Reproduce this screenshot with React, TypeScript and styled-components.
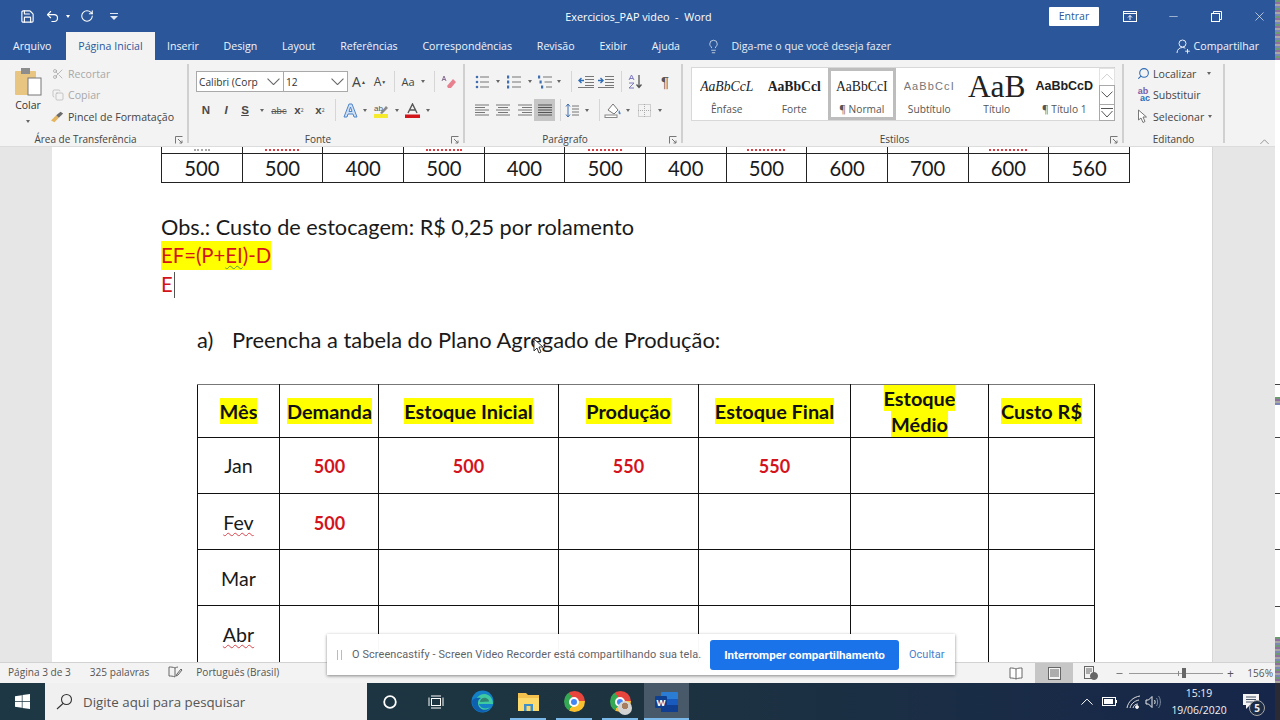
import React from "react";
import styled, { createGlobalStyle } from "styled-components";
import { Save, Undo2, RotateCw, Lightbulb, Scissors, Copy, X, Minus, Search } from "lucide-react";

const Global = createGlobalStyle`
  html, body { margin: 0; padding: 0; width: 1280px; height: 720px; overflow: hidden; background: #fff; }
  * { box-sizing: border-box; }
`;

const UI = `"Open Sans", "Liberation Sans", sans-serif`;
const BODY = `Lato, "Liberation Sans", sans-serif`;

const Screen = styled.div`
  position: relative; width: 1280px; height: 720px; display: flex; overflow: hidden; font-family: ${UI};
`;
const Main = styled.div` width: 1275px; height: 720px; display: flex; flex-direction: column; flex: none; `;
const Strip = styled.div` width: 5px; height: 720px; display: flex; flex-direction: column; background: #fff; `;
const StripPart = styled.div<{ $h: number; $kind: string }>`
  height: ${(p) => p.$h}px; flex: none;
  background: ${(p) =>
    p.$kind === "noise"
      ? "repeating-linear-gradient(180deg,#6f9a72 0 2px,#8f6fa0 2px 4px,#a8a8a0 4px 6px,#7d86b8 6px 8px)"
      : p.$kind === "tick" ? "#444" : p.$kind === "dark" ? "#2a2a35" : "#fff"};
`;

/* Title bar */
const TitleBar = styled.div`
  height: 32px; background: #2b579a; color: #fff; display: grid; grid-template-columns: 1fr auto 1fr; align-items: center; flex: none;
`;
const Qat = styled.div` display: flex; align-items: center; padding-left: 19px; color: #fff; `;
const QatSlot = styled.div<{ $w: number; $ml?: number }>`
  width: ${(p) => p.$w}px; margin-left: ${(p) => p.$ml || 0}px; display: flex; justify-content: center; align-items: center;
`;
const TitleText = styled.div` font-size: 10.8px; color: #fff; white-space: pre; padding-left: 2px; `;
const WinControls = styled.div` display: flex; justify-content: flex-end; align-items: center; gap: 11px; `;
const Entrar = styled.div`
  width: 50px; height: 19px; background: #fff; color: #2b579a; font-size: 10.5px; display: flex; align-items: center; justify-content: center; margin-right: 4px; border-radius: 1px;
`;
const WinBtn = styled.div` width: 32px; display: flex; justify-content: center; align-items: center; color: #fff; `;

/* Tabs */
const TabBar = styled.div` height: 28px; background: #2b579a; display: flex; align-items: stretch; flex: none; `;
const Tab = styled.div<{ $active?: boolean; $first?: boolean }>`
  padding: ${(p) => (p.$first ? "0 15px 0 13px" : p.$active ? "0 12px" : "0 12.4px")};
  font-size: 10.6px; display: flex; align-items: center; white-space: nowrap;
  color: ${(p) => (p.$active ? "#2b579a" : "#f1f4fa")};
  background: ${(p) => (p.$active ? "#f3f3f3" : "transparent")};
`;
const TellMe = styled.div` display: flex; align-items: center; gap: 10px; margin-left: 14px; color: #e8edf6; font-size: 10.6px; `;
const ShareBox = styled.div` margin-left: auto; padding-right: 16px; display: flex; align-items: center; gap: 3px; color: #f1f4fa; font-size: 10.6px; `;

/* Ribbon */
const Ribbon = styled.div`
  height: 87px; background: #f3f3f3; border-bottom: 1px solid #dcdcdc; padding: 4px 0 3px; display: flex; flex: none; position: relative;
  color: #444;
`;
const Group = styled.div<{ $w: number; $plain?: boolean }>`
  width: ${(p) => p.$w}px; height: 79px; display: flex; flex-direction: column; flex: none;
  ${(p) => (p.$plain ? "" : "border-right: 2px solid #d0d0d0;")}
`;
const GroupBody = styled.div` flex: 1; display: flex; min-height: 0; `;
const GroupFoot = styled.div` height: 11px; display: flex; align-items: center; flex: none; margin-bottom: -2px; `;
const GroupLabel = styled.div` flex: 1; text-align: center; font-size: 10px; color: #444; line-height: 11px; `;
const Launcher = styled.div` width: 16px; display: flex; justify-content: center; color: #777; `;

const ColarCol = styled.div` width: 50px; display: flex; flex-direction: column; align-items: center; padding: 3px 0 0 6px; flex: none; font-size: 10.5px; color: #333; `;
const ColarText = styled.div` margin-top: 3px; line-height: 13px; `;
const ClipRows = styled.div` display: flex; flex-direction: column; margin: -1px 0 0 1px; `;
const ClipRow = styled.div<{ $off?: boolean }>`
  height: 21.5px; display: flex; align-items: center; gap: 4px; font-size: 10.6px; white-space: nowrap;
  color: ${(p) => (p.$off ? "#a8a8a8" : "#444")};
`;
const ClipIcon = styled.div<{ $w?: number }>` width: ${(p) => p.$w || 13}px; display: flex; justify-content: center; flex: none; `;

const Rows = styled.div<{ $pl: number }>` padding: 7px 0 0 ${(p) => p.$pl}px; display: flex; flex-direction: column; gap: 7px; `;
const ToolRow = styled.div<{ $h: number }>` height: ${(p) => p.$h}px; display: flex; align-items: center; `;
const Tool = styled.div<{ $w: number; $on?: boolean; $c?: string }>`
  width: ${(p) => p.$w}px; height: 100%; display: flex; align-items: center; justify-content: center; flex: none;
  font-size: 11px; color: ${(p) => p.$c || "#444"};
  background: ${(p) => (p.$on ? "#c6c6c6" : "transparent")};
`;
const Sep = styled.div<{ $w: number }>`
  width: ${(p) => p.$w}px; height: 100%; flex: none; display: flex; justify-content: center;
  &::before { content: ""; width: 1px; background: #d6d6d6; }
`;
const Caret = styled.span`
  width: 0; height: 0; border-left: 2.5px solid transparent; border-right: 2.5px solid transparent; border-top: 3px solid #666;
`;
const FontSelect = styled.div<{ $w: number }>`
  width: ${(p) => p.$w}px; height: 21px; background: #fff; border: 1px solid #a9a9a9; margin-left: -1px; flex: none;
  display: flex; align-items: center; justify-content: space-between; padding: 0 3px 0 2px; font-size: 10.2px; color: #333; white-space: nowrap; overflow: hidden;
  &:first-child { margin-left: 0; }
`;
const BoldLetter = styled.span<{ $italic?: boolean; $under?: boolean }>`
  font-family: "Liberation Sans", sans-serif; font-weight: 700; font-size: 11.5px; color: #4a4a4a;
  font-style: ${(p) => (p.$italic ? "italic" : "normal")};
  text-decoration: ${(p) => (p.$under ? "underline" : "none")};
`;
const SubText = styled.span` font-family: "Liberation Sans", sans-serif; font-size: 9.5px; color: #555; `;
const Mini = styled.sup` font-size: 5px; vertical-align: 4px; `;
const MiniSub = styled.sub` font-size: 5px; vertical-align: -1px; `;

const Gallery = styled.div`
  width: 424px; height: 54px; margin: 3px 0 0 8px; background: #fff; border: 1px solid #d8d8d8; border-right-color: #c4c4c4; display: flex; flex: none; padding-left: 1px;
`;
const StyleItem = styled.div<{ $sel?: boolean }>`
  width: 67.5px; height: 100%; display: flex; flex-direction: column; align-items: center; overflow: hidden; flex: none;
  border: 3px solid ${(p) => (p.$sel ? "#bdbdbd" : "transparent")};
`;
const StylePreview = styled.div` height: 31px; display: flex; align-items: center; white-space: nowrap; overflow: hidden; flex: none; max-width: 62px; `;
const StyleName = styled.div` font-size: 10.2px; color: #555; white-space: nowrap; line-height: 14px; `;
const Prev = styled.span<{ $kind: string }>`
  font-family: ${(p) => (p.$kind === "sub" || p.$kind === "h1" ? `"Liberation Sans", sans-serif` : `"Liberation Serif", serif`)};
  font-size: ${(p) => (p.$kind === "title" ? "31.5px" : p.$kind === "sub" ? "11px" : p.$kind === "h1" ? "12.5px" : "13.7px")};
  font-style: ${(p) => (p.$kind === "em" ? "italic" : "normal")};
  font-weight: ${(p) => (p.$kind === "strong" || p.$kind === "h1" ? 700 : 400)};
  letter-spacing: ${(p) => (p.$kind === "sub" ? "1.1px" : "0")};
  color: ${(p) => (p.$kind === "sub" ? "#777" : "#222")};
  line-height: 31px;
`;
const GalleryScroll = styled.div` width: 16px; display: flex; flex-direction: column; flex: none; margin-left: 0.5px; `;
const ScrollBtn = styled.div<{ $h: number; $off?: boolean }>`
  height: ${(p) => p.$h}px; flex: none; border: 1px solid ${(p) => (p.$off ? "#e2e2e2" : "#a9a9a9")};
  margin-bottom: -1px; display: flex; align-items: center; justify-content: center; color: ${(p) => (p.$off ? "#cfcfcf" : "#555")};
`;
const EditRows = styled.div` padding-left: 12px; margin-top: -1px; display: flex; flex-direction: column; `;
const EditRow = styled.div`
  height: 21.5px; display: flex; align-items: center; gap: 3px; font-size: 10.6px; color: #444; white-space: nowrap;
`;
const AbAc = styled.div`
  display: flex; flex-direction: column; align-items: center; font-family: "Liberation Sans", sans-serif; font-weight: 700; font-size: 9px; line-height: 7.5px; color: #7a5ea8;
  span + span { color: #2f6db5; margin-left: 4px; }
`;
const Collapse = styled.div` position: absolute; right: 6px; bottom: 2px; color: #777; display: flex; `;

/* Document */
const Doc = styled.div` height: 515px; flex: none; background: #e6e6e6; padding-left: 52px; overflow: hidden; `;
const Page = styled.div`
  width: 1161px; height: 515px; background: #fff; border-right: 1px solid #d6d6d6; overflow: hidden;
  font-family: ${BODY}; color: #1a1a1a;
`;
const TopTable = styled.table`
  border-collapse: collapse; table-layout: fixed; width: 969px; margin-left: 109px; font-size: 20.3px;
  td { border: 1px solid #222; text-align: center; padding: 0; }
  tr:first-child td { border-top: none; height: 6px; font-size: 0; vertical-align: bottom; }
  tr:last-child td { height: 28px; line-height: 28px; }
`;
const Squiggle = styled.div<{ $w: number; $c?: string }>`
  width: ${(p) => p.$w}px; margin: 0 auto 2px; border-bottom: 2px dotted ${(p) => p.$c || "#d8434b"};
`;
const Para = styled.div<{ $mt?: number; $red?: boolean }>`
  margin-left: 109px; height: 29px; white-space: nowrap;
  line-height: ${(p) => (p.$red ? "28px" : "30px")};
  font-size: ${(p) => (p.$red ? "20.3px" : "21.7px")};
  margin-top: ${(p) => p.$mt || 0}px; color: ${(p) => (p.$red ? "#d3141c" : "#1a1a1a")};
`;
const Mark = styled.span` display: inline-block; background: #ffff00; height: 29px; `;
const Wavy = styled.span<{ $c: string }>` text-decoration: underline wavy ${(p) => p.$c} 1px; text-underline-offset: 2px; `;
const TextCaret = styled.span` display: inline-block; width: 1px; height: 26px; background: #555; vertical-align: -6px; margin-left: 1px; `;
const ListItem = styled.div`
  margin: 28px 0 0 145px; height: 29px; line-height: 26px; font-size: 21.9px; display: flex; white-space: nowrap;
`;
const ListMark = styled.span` width: 35px; flex: none; `;
const PlanTable = styled.table`
  border-collapse: collapse; table-layout: fixed; width: 897px; margin: 28px 0 0 144.5px; font-size: 19.6px;
  td { border: 1px solid #111; text-align: center; padding: 0 0 0 1px; vertical-align: middle; }
  tr:first-child td { border-top-color: #777; }
  tr:nth-child(n + 3) td { padding-top: 2px; }
  td:nth-child(2) { border-left: 1px solid #888; padding-left: 2px; }
`;
const PlanRow = styled.tr<{ $h: number }>` td { height: ${(p) => p.$h}px; } `;
const HeadCell = styled.span`
  font-weight: 700; background: #ffff00; line-height: 26px; padding: 1px 0; font-size: 19.9px; color: #111;
`;
const RedCell = styled.span` font-weight: 700; color: #d3141c; font-size: 18px; `;

/* Status */
const StatusBar = styled.div`
  height: 21px; flex: none; background: #f3f3f3; border-top: 1px solid #d2d2d2; display: flex; align-items: center; padding: 0 0 2px 8px; font-size: 10.1px; color: #555; white-space: nowrap;
`;
const StatusText = styled.span<{ $mr: number }>` margin-right: ${(p) => p.$mr}px; `;
const StatusRight = styled.div` margin: 0 0 -2px auto; display: flex; align-items: center; height: 20px; padding-right: 2px; `;
const ViewBtn = styled.div<{ $w: number; $on?: boolean }>`
  width: ${(p) => p.$w}px; height: 100%; display: flex; align-items: center; justify-content: center; background: ${(p) => (p.$on ? "#c6c6c6" : "transparent")}; flex: none;
`;
const Zoomer = styled.div` width: 94px; height: 1px; background: #9a9a9a; position: relative; margin: 0 2px 0 0; flex: none; `;
const ZoomThumb = styled.div` position: absolute; left: 53px; top: -5px; width: 4px; height: 10px; background: #666; `;
const ZoomTick = styled.div` position: absolute; left: 49px; top: -2px; width: 1px; height: 5px; background: #888; `;

/* Taskbar */
const Taskbar = styled.div`
  height: 37px; flex: none; background: linear-gradient(90deg, #1d3844 0%, #1d3340 50%, #16264a 100%); display: flex; align-items: stretch; color: #fff;
`;
const StartBtn = styled.div` width: 45px; display: flex; align-items: center; justify-content: center; flex: none; `;
const SearchBox = styled.div`
  width: 322px; background: #f0f0f0; display: flex; align-items: center; padding-left: 11px; gap: 10px; color: #555; font-size: 13.3px; flex: none; white-space: nowrap;
`;
const Slot = styled.div<{ $w?: number; $run?: boolean; $active?: boolean }>`
  width: ${(p) => p.$w || 46}px; flex: none; display: flex; align-items: center; justify-content: center; position: relative;
  background: ${(p) => (p.$active ? "#48596a" : "transparent")};
  &::after {
    content: ""; position: absolute; bottom: 0; height: 2px; background: #79b8e8;
    left: ${(p) => (p.$active ? "0" : "5px")}; right: ${(p) => (p.$active ? "0" : "5px")};
    display: ${(p) => (p.$run ? "block" : "none")};
  }
`;
const Tray = styled.div` margin-left: auto; display: flex; align-items: center; padding-right: 10px; `;
const TrayIcon = styled.div<{ $w: number }>` width: ${(p) => p.$w}px; display: flex; align-items: center; justify-content: center; flex: none; `;
const Clock = styled.div` width: 70px; text-align: center; font-size: 10.4px; line-height: 17px; color: #f2f2f2; flex: none; white-space: nowrap; `;
const Notify = styled.div` position: relative; width: 22px; height: 28px; margin-left: 9px; display: flex; align-items: center; flex: none; `;
const NotifyBadge = styled.div`
  position: absolute; right: 0; bottom: 0; width: 16px; height: 16px; border-radius: 50%; background: #1c2c44; border: 1px solid #a8a8a8;
  font-size: 10px; font-weight: 700; color: #eee; display: flex; align-items: center; justify-content: center;
`;
const ChromeIcon = styled.div`
  width: 21px; height: 21px; border-radius: 50%; position: relative; flex: none;
  background: conic-gradient(from 0deg, #e8453c 0 90deg, #fbc02d 90deg 210deg, #34a853 210deg 330deg, #e8453c 330deg 360deg);
  &::after {
    content: ""; position: absolute; inset: 5.5px; border-radius: 50%; background: #4285f4; border: 2px solid #fff;
  }
`;
const Avatar = styled.div`
  position: absolute; left: 50%; top: 50%; margin: -1px 0 0 -2px; width: 14px; height: 14px; border-radius: 50%;
  background: radial-gradient(circle at 50% 35%, #a57f5f 0 3px, #d4d4d4 3.5px);
`;

/* Overlays */
const Toast = styled.div`
  position: absolute; left: 327px; top: 634px; width: 628px; height: 41px; background: rgba(255,255,255,.97);
  box-shadow: 0 1px 3px rgba(0,0,0,.45); display: flex; align-items: center; padding-left: 10px; font-family: Roboto, sans-serif;
`;
const Pause = styled.div` width: 5px; height: 10px; border-left: 1px solid #bbb; border-right: 1px solid #bbb; margin-right: 10px; flex: none; `;
const ToastText = styled.div` width: 358px; font-size: 10.9px; color: #5f6368; white-space: nowrap; flex: none; letter-spacing: 0.12px; `;
const ToastBtn = styled.div`
  width: 189px; height: 30px; background: #1a73e8; border-radius: 3px; color: #fff; font-weight: 700; font-size: 11.6px; display: flex; align-items: center; justify-content: center; flex: none;
`;
const ToastLink = styled.div` margin-left: 10px; font-size: 11px; color: #4a7fce; `;
const Pointer = styled.svg` position: absolute; left: 533px; top: 338px; `;

/* Small drawings */
const ListIcon = ({ kind }: { kind: "b" | "n" | "m" }) => (
  <svg width="15" height="14" viewBox="0 0 15 14">
    {[2, 7, 12].map((y, i) => (
      <g key={y}>
        {kind === "b" && <circle cx="2" cy={y} r="1.3" fill="#3f6fb0" />}
        {kind !== "b" && <rect x={kind === "m" ? i * 1.5 : 0} y={y - 1.5} width="2.2" height="3" fill="#3f6fb0" />}
        <rect x={5 + (kind === "m" ? i * 1.5 : 0)} y={y - 0.5} width={9 - (kind === "m" ? i * 1.5 : 0)} height="1" fill="#777" />
      </g>
    ))}
  </svg>
);
const AlignIcon = ({ mode }: { mode: "l" | "c" | "r" | "j" }) => {
  const rows = [14, 10, 14, 10, 14];
  return (
    <svg width="14" height="12" viewBox="0 0 14 12">
      {rows.map((w0, i) => {
        const w = mode === "j" ? 14 : w0;
        const x = mode === "l" || mode === "j" ? 0 : mode === "c" ? (14 - w) / 2 : 14 - w;
        return <rect key={i} x={x} y={i * 2.5 + 0.5} width={w} height="1" fill={mode === "j" ? "#555" : "#777"} />;
      })}
    </svg>
  );
};
const IndentIcon = ({ dir }: { dir: number }) => (
  <svg width="16" height="13" viewBox="0 0 16 13">
    {[1, 4, 7, 10].map((y) => <rect key={y} x="7" y={y} width="9" height="1" fill="#777" />)}
    <rect x="0" y="12" width="16" height="1" fill="#777" />
    <path d={dir < 0 ? "M6 5.5H1.5M3.5 3 1 5.5 3.5 8" : "M0 5.5h4.5M2.5 3 5 5.5 2.5 8"} stroke="#2f6db5" strokeWidth="1.4" fill="none" />
  </svg>
);
const Launch = () => (
  <svg width="8" height="8" viewBox="0 0 8 8" fill="none" stroke="#777" strokeWidth="1">
    <path d="M.5 7.5v-7h7M3 3l4 4M7 4.5V7H4.5" />
  </svg>
);
const Chevron = ({ up, w = 12, c = "#666" }: { up?: boolean; w?: number; c?: string }) => (
  <svg width={w} height={w * 0.6} viewBox="0 0 12 7" fill="none" stroke={c} strokeWidth="1">
    <path d={up ? "M.5 6.5 6 1l5.5 5.5" : "M.5.5 6 6 11.5.5"} />
  </svg>
);

const topRows = ["500","500","400","500","400","500","400","500","600","700","600","560"];
const squig: Record<number, [number, string]> = { 0: [16, "#aaa"], 1: [34, "#d8434b"], 3: [36, "#d8434b"], 5: [34, "#d8434b"], 7: [38, "#d8434b"], 10: [38, "#d8434b"] };
const widths = [82, 99, 180, 140, 152, 138, 106];
const heads: React.ReactNode[] = ["Mês", "Demanda", "Estoque Inicial", "Produção", "Estoque Final", <>Estoque<br />Médio</>, "Custo R$"];
const stripData: [number, string][] = [
  [60, "noise"], [324, "white"], [1, "tick"], [12, "white"], [8, "noise"], [32, "white"], [1, "tick"], [55, "white"], [1, "tick"], [55, "white"], [1, "tick"], [56, "white"], [1, "tick"], [30, "white"], [46, "noise"], [37, "dark"],
];

export default function App() {
  return (
    <Screen>
      <Global />
      <Main>
        <TitleBar>
          <Qat>
            <QatSlot $w={16}><Save size={15} strokeWidth={1.8} /></QatSlot>
            <QatSlot $w={24} $ml={5}><Undo2 size={15} strokeWidth={1.8} /></QatSlot>
            <QatSlot $w={8}><Caret style={{ borderTopColor: "#fff" }} /></QatSlot>
            <QatSlot $w={30}><RotateCw size={14} strokeWidth={1.8} /></QatSlot>
            <QatSlot $w={24}>
              <svg width="8" height="7" viewBox="0 0 8 7" fill="#dfe7f3"><rect width="8" height="1" /><path d="M0 3h8L4 7z" /></svg>
            </QatSlot>
          </Qat>
          <TitleText>Exercicios_PAP video  -  Word</TitleText>
          <WinControls>
            <Entrar>Entrar</Entrar>
            <WinBtn>
              <svg width="14" height="11" viewBox="0 0 14 11" fill="none" stroke="#fff"><rect x=".5" y=".5" width="13" height="10" /><path d="M.5 2.5h13M7 9V4.5M5 6.5l2-2 2 2" /></svg>
            </WinBtn>
            <WinBtn><Minus size={13} strokeWidth={1} /></WinBtn>
            <WinBtn>
              <svg width="11" height="11" viewBox="0 0 11 11" fill="none" stroke="#fff"><rect x=".5" y="2.5" width="8" height="8" /><path d="M2.5 2.5v-2h8v8h-2" /></svg>
            </WinBtn>
            <WinBtn><X size={15} strokeWidth={1} /></WinBtn>
          </WinControls>
        </TitleBar>

        <TabBar>
          <Tab $first>Arquivo</Tab>
          <Tab $active>Página Inicial</Tab>
          {["Inserir", "Design", "Layout", "Referências", "Correspondências", "Revisão", "Exibir", "Ajuda"].map((t) => <Tab key={t}>{t}</Tab>)}
          <TellMe>
            <Lightbulb size={15} strokeWidth={1.2} />
            <span>Diga-me o que você deseja fazer</span>
          </TellMe>
          <ShareBox>
            <svg width="15" height="15" viewBox="0 0 15 15" fill="none" stroke="#e6ecf6" strokeWidth="1"><circle cx="6.5" cy="4.5" r="3.5" /><path d="M1 14c0-3.5 2.5-5.5 5.5-5.5 1 0 2 .2 2.8.7M11.5 10v4.5M9.2 12.2h4.6" /></svg>
            <span>Compartilhar</span>
          </ShareBox>
        </TabBar>

        <Ribbon>
          <Group $w={189}>
            <GroupBody>
              <ColarCol>
                <svg width="28" height="29" viewBox="0 0 28 29">
                  <rect x="1" y="4" width="21" height="24" rx="1" fill="#e9c582" />
                  <rect x="7" y="1" width="9" height="6" fill="#8d8d8d" />
                  <rect x="14" y="11" width="13" height="17" fill="#fff" stroke="#777" />
                </svg>
                <ColarText>Colar</ColarText>
                <Caret style={{ marginTop: 8 }} />
              </ColarCol>
              <ClipRows>
                <ClipRow $off><ClipIcon><Scissors size={12} strokeWidth={1.3} color="#999" /></ClipIcon><span>Recortar</span></ClipRow>
                <ClipRow $off><ClipIcon><Copy size={12} strokeWidth={1.2} color="#aaa" /></ClipIcon><span>Copiar</span></ClipRow>
                <ClipRow>
                  <ClipIcon>
                    <svg width="15" height="13" viewBox="0 0 15 13"><path d="M0 11 6 5l3 3-5 5z" fill="#e5b45f" /><path d="M6 5l5-4 3 2-5 5z" fill="#6b6b6b" /></svg>
                  </ClipIcon>
                  <span>Pincel de Formatação</span>
                </ClipRow>
              </ClipRows>
            </GroupBody>
            <GroupFoot><GroupLabel>Área de Transferência</GroupLabel><Launcher><Launch /></Launcher></GroupFoot>
          </Group>

          <Group $w={276}>
            <GroupBody>
              <Rows $pl={7}>
                <ToolRow $h={21}>
                  <FontSelect $w={88}><span>Calibri (Corp</span><Chevron w={13} /></FontSelect>
                  <FontSelect $w={65}><span>12</span><Chevron w={13} /></FontSelect>
                  <Tool $w={22}><span style={{ fontSize: 14 }}>A</span><Mini>▲</Mini></Tool>
                  <Tool $w={20}><span style={{ fontSize: 12 }}>A</span><Mini>▼</Mini></Tool>
                  <Sep $w={8} />
                  <Tool $w={20}>Aa</Tool>
                  <Tool $w={10}><Caret /></Tool>
                  <Sep $w={12} />
                  <Tool $w={16}>
                    <svg width="15" height="14" viewBox="0 0 15 14"><path d="M6 11 12 4l3 3-5 6H7z" fill="#e8818f" /><path d="M5 6 3 1 1 6M2 4.5h2" stroke="#8a6f92" fill="none" /></svg>
                  </Tool>
                </ToolRow>
                <ToolRow $h={22}>
                  <Tool $w={20}><BoldLetter>N</BoldLetter></Tool>
                  <Tool $w={20}><BoldLetter $italic>I</BoldLetter></Tool>
                  <Tool $w={18}><BoldLetter $under>S</BoldLetter></Tool>
                  <Tool $w={16}><Caret /></Tool>
                  <Tool $w={18}><SubText style={{ textDecoration: "line-through" }}>abc</SubText></Tool>
                  <Tool $w={22}><BoldLetter>x</BoldLetter><MiniSub>2</MiniSub></Tool>
                  <Tool $w={20}><BoldLetter>x</BoldLetter><Mini>2</Mini></Tool>
                  <Sep $w={10} />
                  <Tool $w={20}>
                    <svg width="15" height="15" viewBox="0 0 15 15" fill="#cfe0f5" stroke="#4f85c8"><path fillRule="evenodd" d="M6 1h3l5 13h-3l-1-3H5l-1 3H1zM7.500 4 6 8.500h3z" /></svg>
                  </Tool>
                  <Tool $w={9}><Caret /></Tool>
                  <Tool $w={24}>
                    <svg width="16" height="15" viewBox="0 0 16 15">
                      <rect x="1" y="11" width="14" height="4" fill="#f5ea2c" />
                      <path d="M7 10 13 3l2 2-6 6z" fill="#888" />
                      <text x="1" y="8" fontSize="8" fill="#555" fontFamily="Liberation Sans">ab</text>
                    </svg>
                  </Tool>
                  <Tool $w={7}><Caret /></Tool>
                  <Tool $w={24}>
                    <svg width="15" height="15" viewBox="0 0 15 15"><rect x="0" y="11.500" width="15" height="3.500" fill="#d2161c" /><path d="M3 10 7.500 1 12 10M5 7h5" stroke="#555" strokeWidth="1.4" fill="none" /></svg>
                  </Tool>
                  <Tool $w={8}><Caret /></Tool>
                </ToolRow>
              </Rows>
            </GroupBody>
            <GroupFoot><GroupLabel>Fonte</GroupLabel><Launcher><Launch /></Launcher></GroupFoot>
          </Group>

          <Group $w={218}>
            <GroupBody>
              <Rows $pl={8}>
                <ToolRow $h={21}>
                  <Tool $w={18}><ListIcon kind="b" /></Tool>
                  <Tool $w={14}><Caret /></Tool>
                  <Tool $w={18}><ListIcon kind="n" /></Tool>
                  <Tool $w={14}><Caret /></Tool>
                  <Tool $w={16}><ListIcon kind="m" /></Tool>
                  <Tool $w={12}><Caret /></Tool>
                  <Sep $w={12} />
                  <Tool $w={18}><IndentIcon dir={-1} /></Tool>
                  <Tool $w={22}><IndentIcon dir={1} /></Tool>
                  <Sep $w={8} />
                  <Tool $w={22}>
                    <svg width="16" height="15" viewBox="0 0 16 15" fill="none"><path d="M1 6 3.500 1 6 6M2 4.500h3" stroke="#7d7abf" /><path d="M1 9h5L1 14h5" stroke="#7d7abf" /><path d="M11 1v12M8.500 10.500 11 13.500l2.500-3" stroke="#555" strokeWidth="1.300" /></svg>
                  </Tool>
                  <Tool $w={36}><span style={{ fontSize: 15, color: "#555", fontFamily: "Liberation Sans" }}>¶</span></Tool>
                </ToolRow>
                <ToolRow $h={22}>
                  <Tool $w={18}><AlignIcon mode="l" /></Tool>
                  <Tool $w={24}><AlignIcon mode="c" /></Tool>
                  <Tool $w={19}><AlignIcon mode="r" /></Tool>
                  <Tool $w={21} $on><AlignIcon mode="j" /></Tool>
                  <Sep $w={10} />
                  <Tool $w={14}>
                    <svg width="14" height="15" viewBox="0 0 14 15" fill="none"><path d="M3 1v13M1 3.500 3 1l2 2.500M1 11.500 3 14l2-2.500" stroke="#3f6fb0" /><path d="M7 3h7M7 6h7M7 9h7M7 12h7" stroke="#777" /></svg>
                  </Tool>
                  <Tool $w={16}><Caret /></Tool>
                  <Sep $w={8} />
                  <Tool $w={20}>
                    <svg width="18" height="16" viewBox="0 0 18 16" fill="none"><path d="M4 8 9 2l5 6-4 4z" stroke="#777" fill="#fff" /><path d="M15 8c1 2 2 3 1.500 4s-3 0-1.500-4z" fill="#4f85c8" /><rect x="1" y="13" width="12" height="2.500" fill="#fff" stroke="#888" /></svg>
                  </Tool>
                  <Tool $w={10}><Caret /></Tool>
                  <Tool $w={22}>
                    <svg width="13" height="13" viewBox="0 0 13 13" fill="none" stroke="#aaa" strokeDasharray="1 1"><rect x=".5" y=".5" width="12" height="12" /><path d="M6.500 0v13M0 6.500h13" /></svg>
                  </Tool>
                  <Tool $w={10}><Caret /></Tool>
                </ToolRow>
              </Rows>
            </GroupBody>
            <GroupFoot><GroupLabel>Parágrafo</GroupLabel><Launcher><Launch /></Launcher></GroupFoot>
          </Group>

          <Group $w={441}>
            <GroupBody>
              <Gallery>
                <StyleItem><StylePreview><Prev $kind="em">AaBbCcL</Prev></StylePreview><StyleName>Ênfase</StyleName></StyleItem>
                <StyleItem><StylePreview><Prev $kind="strong">AaBbCcl</Prev></StylePreview><StyleName>Forte</StyleName></StyleItem>
                <StyleItem $sel><StylePreview><Prev $kind="normal">AaBbCcI</Prev></StylePreview><StyleName>¶ Normal</StyleName></StyleItem>
                <StyleItem><StylePreview><Prev $kind="sub">AaBbCcI</Prev></StylePreview><StyleName>Subtítulo</StyleName></StyleItem>
                <StyleItem><StylePreview><Prev $kind="title">AaB</Prev></StylePreview><StyleName>Título</StyleName></StyleItem>
                <StyleItem><StylePreview><Prev $kind="h1">AaBbCcD</Prev></StylePreview><StyleName>¶ Título 1</StyleName></StyleItem>
                <GalleryScroll>
                  <ScrollBtn $h={18} $off><Chevron up c="#cfcfcf" /></ScrollBtn>
                  <ScrollBtn $h={20}><Chevron c="#555" /></ScrollBtn>
                  <ScrollBtn $h={17}>
                    <svg width="12" height="10" viewBox="0 0 12 10" fill="none" stroke="#555"><path d="M0 .5h12M.5 3 6 9l5.500-6" /></svg>
                  </ScrollBtn>
                </GalleryScroll>
              </Gallery>
            </GroupBody>
            <GroupFoot><GroupLabel>Estilos</GroupLabel><Launcher><Launch /></Launcher></GroupFoot>
          </Group>

          <Group $w={101}>
            <GroupBody>
              <EditRows>
                <EditRow>
                  <ClipIcon $w={14}><Search size={13} strokeWidth={2} color="#2f6db5" style={{ transform: "scaleX(-1)" }} /></ClipIcon>
                  <span>Localizar</span><Caret style={{ marginLeft: 8 }} />
                </EditRow>
                <EditRow>
                  <ClipIcon $w={14}>
                    <AbAc><span>ab</span><span>ac</span></AbAc>
                  </ClipIcon>
                  <span>Substituir</span>
                </EditRow>
                <EditRow>
                  <ClipIcon $w={14}>
                    <svg width="12" height="15" viewBox="0 0 12 15" fill="#fff" stroke="#777"><path d="M1.500 1v10l2.500-2 2 4.500 2-1-2-4.500h3.500z" /></svg>
                  </ClipIcon>
                  <span>Selecionar</span><Caret style={{ marginLeft: 1 }} />
                </EditRow>
              </EditRows>
            </GroupBody>
            <GroupFoot><GroupLabel>Editando</GroupLabel></GroupFoot>
          </Group>
          <Collapse><Chevron up w={9} c="#777" /></Collapse>
        </Ribbon>

        <Doc>
          <Page>
            <TopTable>
              <tbody>
                <tr>{topRows.map((_, i) => <td key={i}>{squig[i] ? <Squiggle $w={squig[i][0]} $c={squig[i][1]} /> : null}</td>)}</tr>
                <tr>{topRows.map((v, i) => <td key={i}>{v}</td>)}</tr>
              </tbody>
            </TopTable>
            <Para $mt={29}>Obs.: Custo de estocagem: R$ 0,25 por rolamento</Para>
            <Para $red><Mark>EF=(P+<Wavy $c="#5d9a4a">EI</Wavy>)-D</Mark></Para>
            <Para $red>E<TextCaret /></Para>
            <ListItem><ListMark>a)</ListMark><span>Preencha a tabela do Plano Agregado de Produção:</span></ListItem>
            <PlanTable>
              <colgroup>{widths.map((w, i) => <col key={i} style={{ width: w }} />)}</colgroup>
              <tbody>
                <PlanRow $h={53}>{heads.map((h, i) => <td key={i}><HeadCell>{h}</HeadCell></td>)}</PlanRow>
                <PlanRow $h={56}>
                  <td>Jan</td>
                  <td><RedCell>500</RedCell></td><td><RedCell>500</RedCell></td><td><RedCell>550</RedCell></td><td><RedCell>550</RedCell></td><td /><td />
                </PlanRow>
                <PlanRow $h={56}><td><Wavy $c="#d8434b">Fev</Wavy></td><td><RedCell>500</RedCell></td><td /><td /><td /><td /><td /></PlanRow>
                <PlanRow $h={56}><td>Mar</td><td /><td /><td /><td /><td /><td /></PlanRow>
                <PlanRow $h={57}><td><Wavy $c="#d8434b">Abr</Wavy></td><td /><td /><td /><td /><td /><td /></PlanRow>
              </tbody>
            </PlanTable>
          </Page>
        </Doc>

        <StatusBar>
          <StatusText $mr={19}>Página 3 de 3</StatusText>
          <StatusText $mr={19}>325 palavras</StatusText>
          <StatusText $mr={13}>
            <svg width="15" height="12" viewBox="0 0 15 12" fill="none" stroke="#666" style={{ verticalAlign: -2 }}><path d="M7 2C5 1 3 1 1 1v9c2 0 4 0 6 1V2zM7 2c1-.5 2-1 3-1M13 3 9 8l-1 2 2-1 4-5z" /></svg>
          </StatusText>
          <StatusText $mr={0}>Português (Brasil)</StatusText>
          <StatusRight>
            <ViewBtn $w={38}>
              <svg width="14" height="13" viewBox="0 0 14 13" fill="#fff" stroke="#666"><path d="M7 2C5 1 3 1 1 1v10c2 0 4 0 6 1 2-1 4-1 6-1V1c-2 0-4 0-6 1zM7 2v10" /></svg>
            </ViewBtn>
            <ViewBtn $w={38} $on>
              <svg width="13" height="13" viewBox="0 0 13 13" fill="#f3f3f3" stroke="#666"><rect x=".5" y=".5" width="12" height="12" /><path d="M2 3h9M2 5h9M2 7h9M2 9h9" /></svg>
            </ViewBtn>
            <ViewBtn $w={36}>
              <svg width="14" height="14" viewBox="0 0 14 14" fill="#f3f3f3" stroke="#666"><rect x=".5" y=".5" width="9" height="12" /><path d="M2 3h6M2 5h6M2 7h4" /><circle cx="10" cy="10" r="3.500" fill="#666" /></svg>
            </ViewBtn>
            <ViewBtn $w={20}><Minus size={9} color="#555" /></ViewBtn>
            <Zoomer><ZoomTick /><ZoomThumb /></Zoomer>
            <ViewBtn $w={10}><span style={{ fontSize: 12, color: "#555" }}>+</span></ViewBtn>
            <StatusText $mr={0} style={{ marginLeft: 12 }}>156%</StatusText>
          </StatusRight>
        </StatusBar>

        <Taskbar>
          <StartBtn>
            <svg width="15" height="15" viewBox="0 0 15 15" fill="#fff"><path d="M0 2.200 6.800 1.200V7H0zM7.500 1.100 15 0v7H7.500zM0 7.800h6.800v6L0 12.800zM7.500 7.800H15V15l-7.500-1.100z" /></svg>
          </StartBtn>
          <SearchBox>
            <svg width="17" height="17" viewBox="0 0 17 17" fill="none" stroke="#333" strokeWidth="1.100"><circle cx="10.500" cy="6.500" r="5" /><path d="M7 10.500 1 16" /></svg>
            <span>Digite aqui para pesquisar</span>
          </SearchBox>
          <Slot><svg width="14" height="14" viewBox="0 0 14 14" fill="none" stroke="#fff" strokeWidth="1.800"><circle cx="7" cy="7" r="5.800" /></svg></Slot>
          <Slot>
            <svg width="16" height="14" viewBox="0 0 16 14" fill="none" stroke="#fff"><rect x="3.500" y="3.500" width="9" height="7" /><path d="M1 2.500V11M15 2.500V11M3 1h10M3 13h10" /></svg>
          </Slot>
          <Slot>
            <svg width="23" height="23" viewBox="0 0 23 23"><circle cx="11.500" cy="11.500" r="11" fill="#1480c8" /><path d="M3 15c1-8 8-13 14-10 4 2 5 6 5 9H8c1 4 6 6 11 3-5 6-14 5-16-2z" fill="#3fc9a0" /><path d="M9 12c0-3 3-5 6-4 2 .7 3 2 3 3.500L9 12z" fill="#1d3340" opacity="0.450" /><path d="M1 11c0 7 5 11 10 11 3 0 5-1 7-3-5 2-10 0-11-5-.5-3 1-5 3-6C5 7 2 9 1 11z" fill="#0f5fb0" /></svg>
          </Slot>
          <Slot $run>
            <svg width="21" height="19" viewBox="0 0 21 19"><path d="M0 1h8l2 2h11v16H0z" fill="#f2c14e" /><path d="M0 6h21v13H0z" fill="#fbd96b" /><rect x="6" y="12" width="9" height="7" fill="#3f8fc9" /><rect x="8.500" y="14" width="4" height="5" fill="#fbd96b" /></svg>
          </Slot>
          <Slot $run><ChromeIcon /></Slot>
          <Slot $run><ChromeIcon /><Avatar /></Slot>
          <Slot $run $active $w={45} style={{ marginLeft: 1 }}>
            <svg width="23" height="20" viewBox="0 0 23 20">
              <rect x="6" y="0" width="17" height="20" rx="1" fill="#2b7cd3" />
              <rect x="6" y="13" width="17" height="7" fill="#103f91" />
              <rect x="6" y="7" width="17" height="6" fill="#185abd" />
              <rect x="0" y="4" width="12" height="12" rx="1" fill="#0f3f8f" />
              <text x="6" y="13.500" textAnchor="middle" fontSize="9.500" fontWeight="700" fill="#fff" fontFamily="Liberation Sans">W</text>
            </svg>
          </Slot>
          <Tray>
            <TrayIcon $w={14}><Chevron up w={12} c="#fff" /></TrayIcon>
            <TrayIcon $w={30}>
              <svg width="15" height="9" viewBox="0 0 15 9"><rect x=".5" y=".5" width="13" height="8" fill="none" stroke="#fff" /><rect x="2" y="2" width="9" height="5" fill="#fff" /><rect x="14" y="3" width="1" height="3" fill="#fff" /></svg>
            </TrayIcon>
            <TrayIcon $w={18}>
              <svg width="15" height="14" viewBox="0 0 15 14" fill="none" stroke="#ddd"><path d="M1 13C2 7 7 2 14 1M4 13c1-4 4-7 9-8M7 13c.5-2 2-4 5-4" /><circle cx="11" cy="12" r="1.500" fill="#fff" /></svg>
            </TrayIcon>
            <TrayIcon $w={22}>
              <svg width="16" height="14" viewBox="0 0 16 14" fill="none" stroke="#eee"><path d="M1 5h2.500L7 1.500v11L3.500 9H1zM9.500 5c.8 1 .8 3 0 4" /><path d="M11.500 3c1.500 2 1.500 6 0 8M13.500 1c2.500 3 2.500 9 0 12" stroke="#7c8ba0" /></svg>
            </TrayIcon>
            <Clock>15:19<br />19/06/2020</Clock>
            <Notify>
              <svg width="16" height="16" viewBox="0 0 16 16" fill="#f4f4f4"><path d="M0 0h16v11H7l-4 4v-4H0z" /><path d="M3 3h10M3 5.500h10M3 8h7" stroke="#1c2c44" strokeWidth=".8" /></svg>
              <NotifyBadge>5</NotifyBadge>
            </Notify>
          </Tray>
        </Taskbar>
      </Main>
      <Strip>
        {stripData.map(([h, k], i) => <StripPart key={i} $h={h} $kind={k} />)}
      </Strip>

      <Toast>
        <Pause />
        <ToastText>O Screencastify - Screen Video Recorder está compartilhando sua tela.</ToastText>
        <ToastBtn>Interromper compartilhamento</ToastBtn>
        <ToastLink>Ocultar</ToastLink>
      </Toast>
      <Pointer width="13" height="17" viewBox="0 0 13 17" fill="#fff" stroke="#333" strokeWidth="1">
        <path d="M1 1v12l3-3 2 5 2-1-2-5h4z" />
      </Pointer>
    </Screen>
  );
}
